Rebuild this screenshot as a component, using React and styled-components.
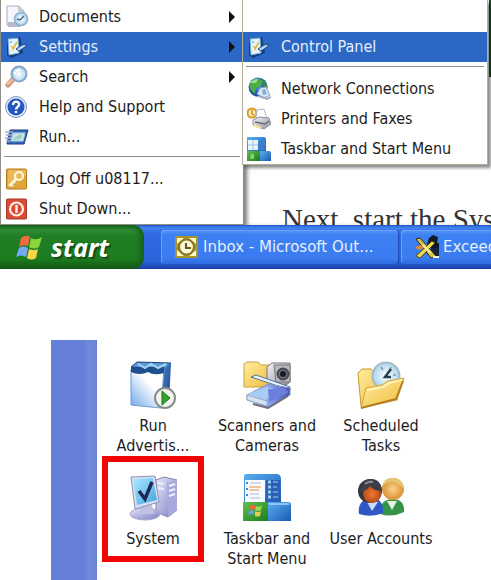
import React from 'react';
import styled, { createGlobalStyle, css } from 'styled-components';

const GlobalStyle = createGlobalStyle`
  * {
    box-sizing: border-box;
  }

  body {
    margin: 0;
    overflow: hidden;
    background: #fff;
    color: #1c1c1c;
    font-family: 'DejaVu Sans Condensed', 'Noto Sans', sans-serif;
    font-size: 16px;
  }

  button {
    margin: 0;
    padding: 0;
    border: 0;
    background: none;
    color: inherit;
    font: inherit;
  }
`;

const Page = styled.main`
  display: flex;
  flex-direction: column;
  gap: 71px;
`;

const Desktop = styled.section`
  overflow: hidden;
`;

const Workspace = styled.div`
  position: relative;
  display: flex;
`;

const MenuPanel = styled.nav`
  flex: none;
  width: 244px;
  padding-top: 2px;
  background: #fff;
  border: solid #8f8d86;
  border-width: 0 1px 1px;
`;

const SubMenuPanel = styled(MenuPanel)`
  position: absolute;
  top: 0;
  left: 242px;
  width: 246px;
  padding-top: 32px;
  border-color: #b5ad98;
  box-shadow: 3px 3px 3px rgba(0, 0, 0, 0.45);
`;

const MenuList = styled.ul`
  margin: 0;
  padding: 0;
  list-style: none;
`;

const MenuButton = styled.button`
  display: flex;
  align-items: center;
  gap: 10px;
  width: 100%;
  height: 30px;
  padding: 0 8px 0 4px;
  line-height: 20px;
  text-align: left;
  white-space: nowrap;

  ${props =>
    props.$active &&
    css`
      background: #2b67c4;
      color: #e4eefc;
    `}
`;

const MenuLabel = styled.span`
  flex: 1;
`;

const Separator = styled.hr`
  height: 1px;
  margin: 4px 3px 7px;
  border: 0;
  background: #8c8c8c;
`;

const Document = styled.article`
  flex: 1;
  display: flex;
  align-items: flex-end;
  min-width: 0;
  height: 225px;
  padding-left: 38px;
  overflow: hidden;
  box-shadow: inset 5px 0 4px -2px #777;
`;

const DocumentText = styled.p`
  flex: none;
  height: 22px;
  margin: 0;
  color: #333;
  font-family: 'Liberation Serif', serif;
  font-size: 29px;
  line-height: 32px;
  white-space: nowrap;
`;

const WindowEdge = styled.div`
  position: absolute;
  top: 0;
  right: 0;
  width: 2px;
  height: 77px;
  background: #14551c;
`;

const Taskbar = styled.footer`
  display: flex;
  gap: 17px;
  height: 44px;
  background: linear-gradient(#2456c4 0, #4285f0 3px, #2f6ae2 8px, #2a63da 36px, #1941a5 44px);
`;

const StartButton = styled.button`
  flex: none;
  display: flex;
  align-items: center;
  gap: 9px;
  width: 144px;
  padding-left: 16px;
  border-radius: 0 12px 12px 0;
  background: linear-gradient(#14601a 0, #2f8a34 5px, #1f7d24 12px, #1e7c20 34px, #105415 44px);
  box-shadow: inset -5px 0 5px -1px #14621b;
  color: #fff;
  font-family: 'Noto Sans', sans-serif;
  font-size: 25px;
  font-style: italic;
  font-weight: 700;
  line-height: 30px;
  text-shadow: 2px 2px 1px #174d18;
`;

const TaskList = styled.div`
  flex: 1;
  display: flex;
  gap: 3px;
  min-width: 0;
  padding: 5px 0;
`;

const TaskButton = styled.button`
  flex: none;
  display: flex;
  align-items: center;
  gap: 4px;
  width: 237px;
  padding-left: 14px;
  border-radius: 4px;
  background: linear-gradient(#5796f8, #3c80f2 5px, #3b7cf0 28px, #2f6ae0);
  box-shadow: inset 1px 1px 0 #6ba3fa, 1px 0 1px #1e4cb4;
  color: #e6effc;
  font-family: 'DejaVu Sans', sans-serif;
  font-size: 15px;
  white-space: nowrap;
`;

const Folder = styled.section`
  display: flex;
  margin-left: 51px;
`;

const SidePane = styled.aside`
  flex: none;
  width: 46px;
  background: linear-gradient(90deg, #6680d9 0 34px, #7088d8 35px 40px, #6f86d9 41px 44px, #647bd0 46px);
`;

const TileGrid = styled.div`
  display: grid;
  grid-template-columns: repeat(3, 102px);
  grid-auto-rows: 106px;
  gap: 7px 12px;
  padding: 3px 5px 18px;
`;

const Tile = styled.button`
  display: flex;
  flex-direction: column;
  align-items: center;
  justify-content: flex-start;
  gap: 7px;
  padding-top: 12px;
  border: 6px solid ${props => (props.$marked ? '#f00505' : 'transparent')};
`;

const TileLabel = styled.span`
  line-height: 20px;
  text-align: center;
  white-space: pre;
`;

const Drawing = styled.svg`
  flex: none;
`;

const Icon = ({ size = 24, children }) => (
  <Drawing width={size} height={size} viewBox={`0 0 ${size} ${size}`} aria-hidden="true">
    {children}
  </Drawing>
);

const GradientDefs = styled.svg`
  position: absolute;
`;

const Gradients = () => (
  <GradientDefs width="0" height="0" aria-hidden="true">
    <defs>
      <linearGradient id="paper" x1="0" y1="1" x2="1" y2="0">
        <stop offset="0" stopColor="#6fa6e8" />
        <stop offset="0.6" stopColor="#fff" />
      </linearGradient>
      <linearGradient id="navy" x2="1" y2="1">
        <stop offset="0" stopColor="#4a8bd0" />
        <stop offset="1" stopColor="#153b80" />
      </linearGradient>
      <linearGradient id="folder" x2="1" y2="1">
        <stop offset="0" stopColor="#fff0a0" />
        <stop offset="1" stopColor="#efb93c" />
      </linearGradient>
      <linearGradient id="scan" x2="1">
        <stop offset="0" stopColor="#cfe4ff" />
        <stop offset="0.6" stopColor="#7c98e8" />
        <stop offset="1" stopColor="#4150a8" />
      </linearGradient>
      <linearGradient id="metal" x2="1" y2="1">
        <stop offset="0" stopColor="#f5f5f8" />
        <stop offset="1" stopColor="#8f90a0" />
      </linearGradient>
      <linearGradient id="screen" x2="1" y2="1">
        <stop offset="0" stopColor="#aeeaff" />
        <stop offset="1" stopColor="#40a4e0" />
      </linearGradient>
      <linearGradient id="tower" x2="1" y2="1">
        <stop offset="0" stopColor="#e8e8fc" />
        <stop offset="1" stopColor="#7b7cc0" />
      </linearGradient>
      <linearGradient id="blue" x2="1" y2="1">
        <stop offset="0" stopColor="#5ab0f0" />
        <stop offset="1" stopColor="#1b58b4" />
      </linearGradient>
      <linearGradient id="green" x2="1" y2="1">
        <stop offset="0" stopColor="#62c04c" />
        <stop offset="1" stopColor="#177a20" />
      </linearGradient>
      <radialGradient id="lens">
        <stop offset="0" stopColor="#fff" />
        <stop offset="1" stopColor="#a9d5ee" />
      </radialGradient>
      <radialGradient id="globe" cx="0.35" cy="0.3">
        <stop offset="0" stopColor="#8ed0f8" />
        <stop offset="1" stopColor="#1450b0" />
      </radialGradient>
      <radialGradient id="darkFace">
        <stop offset="0" stopColor="#f07a30" />
        <stop offset="1" stopColor="#b64a18" />
      </radialGradient>
      <radialGradient id="lightFace">
        <stop offset="0" stopColor="#ffd088" />
        <stop offset="1" stopColor="#d79238" />
      </radialGradient>
    </defs>
  </GradientDefs>
);

const DocumentsIcon = () => (
  <Icon>
    <path d="M2 1h12l5 5v14H2z" fill="#f4f6fa" stroke="#a3aec0" />
    <path d="M14 1v5h5" fill="#cdd7e6" stroke="#a3aec0" />
    <path d="M3 17h9l4 5H3z" fill="#b5bdcc" />
    <circle cx="16" cy="14" r="6.5" fill="url(#lens)" stroke="#8fb0cc" strokeWidth="1.6" />
    <path d="M15 15l4-4M15 15l-3-1" stroke="#496481" strokeWidth="1.4" />
  </Icon>
);

const SettingsIcon = () => (
  <Icon>
    <path d="M2 4l13-2 3 16-12 5-4-3z" fill="#123e7e" />
    <path d="M3 4l10-1 1 15-10 2z" fill="#e4f2fa" stroke="#79aee0" />
    <path d="M7 11l1 3 4-7" fill="none" stroke="#e0b84d" strokeWidth="1.6" />
    <path d="M5 6h2v2H5z" fill="#9cc4e4" />
    <path d="M11 14l6-4 5-1-2 3-6 4z" fill="#b4d6f5" stroke="#214d88" />
  </Icon>
);

const SearchIcon = () => (
  <Icon>
    <path d="M9 13l-6 7" stroke="#c99274" strokeWidth="5" strokeLinecap="round" />
    <path d="M9 13l-6 6" stroke="#f2bc9c" strokeWidth="3" strokeLinecap="round" />
    <circle cx="14" cy="9" r="7.5" fill="url(#lens)" stroke="#88a6c8" strokeWidth="2" />
    <path d="M10 9c0-3 3-4 5-4" fill="none" stroke="#fff" strokeWidth="2" />
  </Icon>
);

const HelpIcon = () => (
  <Icon>
    <circle cx="11" cy="12" r="10.5" fill="#e3edf9" stroke="#8299c0" />
    <circle cx="11" cy="12" r="8.5" fill="#2458c0" />
    <path d="M8 10c0-5 7-4 6 0-.4 2-3 2-3 4.5M11 16v2" fill="none" stroke="#fff" strokeWidth="2.4" />
  </Icon>
);

const RunIcon = () => (
  <Icon>
    <path d="M5 5h18l-4 14H2z" fill="#3c69b8" stroke="#183c80" />
    <path d="M8 8h12l-2 8H6z" fill="#c9e9df" stroke="#a8cbf0" />
    <path d="M10 12l7-3-1 5-8 1z" fill="#9ccfbd" />
    <path d="M0 7h8M1 10h6M0 13h6M1 16h4" stroke="#9db0cf" strokeWidth="1.3" />
  </Icon>
);

const LogOffIcon = () => (
  <Icon>
    <rect x="1.5" y="2" width="20" height="20" rx="1" fill="#dda63a" stroke="#b67a1d" />
    <path d="M3 3h18v5L3 20z" fill="#f3cf75" opacity=".5" />
    <circle cx="14" cy="9" r="4" fill="none" stroke="#fff8db" strokeWidth="2.2" />
    <path d="M11 12l-7 7M5 17l3 2M8 14l2 2" stroke="#fff8db" strokeWidth="2.2" />
  </Icon>
);

const ShutDownIcon = () => (
  <Icon>
    <rect x="1.5" y="2" width="20" height="20" rx="1" fill="#d84c35" stroke="#a93728" />
    <circle cx="11.5" cy="12" r="6.5" fill="none" stroke="#fff1e8" strokeWidth="2.2" />
    <path d="M11.5 8v8" stroke="#fff1e8" strokeWidth="2.4" />
  </Icon>
);

const NetworkIcon = () => (
  <Icon>
    <circle cx="11" cy="10" r="9.5" fill="url(#globe)" />
    <path d="M4 4c5-4 9-2 12 0l-3 6-4 1-1 6C4 14 1 10 4 4z" fill="#4dac42" />
    <path d="M15 2c4 2 6 6 5 10l-4-3z" fill="#2e9145" />
    <path d="M3 6c2-3 5-4 8-4l-2 4z" fill="#b9efc5" opacity=".7" />
    <path d="M13 11l6-1 4 8-6 3-7-4z" fill="#dce6f4" stroke="#8fa0b9" />
    <path d="M15 13l3-1 2 5-4 1z" fill="#78aee8" />
    <path d="M12 19l8 3 4-2" fill="none" stroke="#9caabb" strokeWidth="2" />
  </Icon>
);

const PrinterIcon = () => (
  <Icon>
    <circle cx="5" cy="6" r="4.5" fill="#ffe8a0" stroke="#d99b28" strokeWidth="2" />
    <path d="M5 3v4l2 1" fill="none" stroke="#977022" />
    <path d="M10 3l7-1 3 10H9z" fill="#fff" stroke="#b0b7c4" />
    <path d="M6 13l6-3 10 1 2 6-7 5-11-4z" fill="url(#metal)" stroke="#8d8f99" />
    <path d="M8 15l10 2 4-3" fill="none" stroke="#666a76" strokeWidth="1.5" />
    <path d="M7 17l8 3-2 2-7-3z" fill="#f1df9b" />
  </Icon>
);

const TaskbarIcon = () => (
  <Icon>
    <path d="M0 0h17q2 0 2 2v13H0z" fill="url(#blue)" />
    <path d="M1 3h10v10H1z" fill="#e8f3fc" />
    <path d="M1 8h10M6 3v10" stroke="#9cc6ea" />
    <path d="M12 3h6v10h-6z" fill="#3d7fca" />
    <path d="M0 14h13v10H0z" fill="url(#green)" />
    <path d="M13 14h9q2 0 2 2v8H13z" fill="url(#blue)" />
    <path d="M4 17q2-1 3 1v4q-2-1-4 0z" fill="#8fd070" />
  </Icon>
);

const ArrowIcon = () => (
  <svg width="6" height="12" viewBox="0 0 6 12" aria-hidden="true">
    <path d="M0 0l6 6-6 6z" fill="#111" />
  </svg>
);

const FlagIcon = () => (
  <Icon size={26}>
    <path d="M5 4q5-4 9-1l-2 9q-5-2-9 1z" fill="#ef6b3b" />
    <path d="M15 4q5 3 11-1l-3 10q-5 3-10 0z" fill="#8bd33d" />
    <path d="M3 14q4-3 9 0l-2 9q-5-3-10 0z" fill="#73a9f5" />
    <path d="M13 15q5 2 9 0l-2 9q-5 3-9 0z" fill="#f7d448" />
  </Icon>
);

const OutlookIcon = () => (
  <Icon>
    <rect x="0" y="1" width="23" height="22" fill="#a8942a" />
    <path d="M2 3h7L2 9zM21 3h-7l7 6zM2 21h7l-7-6zM21 21h-7l7-6z" fill="#fff9cf" />
    <circle cx="11.5" cy="12" r="7.5" fill="#fffbdc" stroke="#8c7c20" strokeWidth="2.2" />
    <path d="M11 8v5h5" fill="none" stroke="#6b5c14" strokeWidth="2.2" />
  </Icon>
);

const ExceedIcon = () => (
  <Icon>
    <path d="M14 3l4-3 5 2-1 6h2v5l-4 2-5-3-3-3z" fill="#10192c" />
    <path d="M16 13h8v9l-4 1-6-5z" fill="#18233a" />
    <path d="M1 4l4-1 16 18-5 2z" fill="#d5c64a" stroke="#30290c" />
    <path d="M17 6l3 2L5 23l-4-2z" fill="#eddc52" stroke="#51430d" />
    <path d="M0 12l6-2 3 3-6 2z" fill="#e08a30" />
    <path d="M8 10l8 8" stroke="#fff09a" strokeWidth="2" />
    <path d="M18 22h6" stroke="#f4f4e0" strokeWidth="2" />
  </Icon>
);

const RunProgramsIcon = () => (
  <Icon size={48}>
    <path d="M2 6l6-5 34 1-5 6z" fill="#5b9bd8" stroke="#1a447d" />
    <path d="M34 8l8-6-2 40-8 5z" fill="url(#navy)" />
    <path d="M2 8h33l-3 39-30-3z" fill="url(#paper)" stroke="#6d9bce" />
    <path d="M2 6h33v6q-10 3-16-1-8 4-17 0z" fill="#1e508f" />
    <path d="M9 3l7 4 6-4 7 4 8-4" fill="none" stroke="#a8d3f3" strokeWidth="2" />
    <circle cx="36" cy="37" r="10" fill="#f2f4ef" stroke="#868d8b" strokeWidth="2" />
    <path d="M33 30l8 7-8 7z" fill="#35a52a" stroke="#1b7416" />
  </Icon>
);

const ScannerIcon = () => (
  <Icon size={48}>
    <path d="M1 3l3-2h11l3 3h10v22H1z" fill="url(#folder)" stroke="#cda045" />
    <path d="M24 6l5-4h18v19l-4 3-19-3z" fill="url(#metal)" stroke="#777" />
    <path d="M31 4h16v17H33z" fill="#b8b8bd" stroke="#777" />
    <circle cx="40" cy="13" r="5.5" fill="#6c6e78" stroke="#454750" strokeWidth="2" />
    <circle cx="40" cy="13" r="3" fill="#171b2b" />
    <path d="M8 16l5-2 34 12v3z" fill="#e8f5ff" stroke="#53759b" />
    <path d="M25 23l22 4v7L25 46l-21-7v-5z" fill="url(#scan)" stroke="#8694b8" />
    <path d="M5 33l19-7 17 4-19 9z" fill="#a9cbf4" />
    <path d="M25 28l16-1 5 4-20 10z" fill="#6c7fdc" />
    <path d="M4 34l20 6v5L4 39z" fill="#d5e2f3" stroke="#9aaac8" />
    <path d="M10 43l15 4 20-12" fill="none" stroke="#706d7a" strokeWidth="2" />
  </Icon>
);

const ScheduleIcon = () => (
  <Icon size={48}>
    <path d="M4 45L1 12l4-4h9l3 3 10 1 1 22z" fill="url(#folder)" stroke="#c9952e" />
    <circle cx="29" cy="15" r="13.5" fill="url(#lens)" stroke="#a5bac6" strokeWidth="2" />
    <path d="M24 6l2 3M34 6l-1 2M39 14h-3" stroke="#7899aa" strokeWidth="1.5" />
    <path d="M34 8l-6 8h6" fill="none" stroke="#27404f" strokeWidth="2.5" />
    <path d="M9 27l16-3 6-4 16-3-7 22-36 8z" fill="url(#folder)" stroke="#d3a23e" />
    <path d="M10 29l16-3 6-4 13-3" fill="none" stroke="#fff5bd" strokeWidth="2" />
    <path d="M4 47l35-9 7-18" fill="none" stroke="#b28022" strokeWidth="2" />
  </Icon>
);

const SystemIcon = () => (
  <Icon size={48}>
    <path d="M27 6l8-3 13 3v30l-9 7-12-5z" fill="url(#tower)" stroke="#8384ad" />
    <path d="M38 9l10-3v30l-9 7z" fill="#a9a8dc" />
    <path d="M29 9l6 1M29 14l6 1M40 12l6-2M40 17l6-2M40 22l6-2" stroke="#eef0ff" strokeWidth="2" />
    <ellipse cx="16" cy="40" rx="15" ry="6" fill="url(#tower)" stroke="#a8a8c8" />
    <path d="M12 31h11l2 9H12z" fill="#c1c1e4" />
    <path d="M2 3l24-1 4 26-24 7z" fill="#d9def4" stroke="#8c94b8" />
    <path d="M4 5l20-1 4 22-20 5z" fill="url(#screen)" />
    <path d="M10 17l6 8 7-17" fill="none" stroke="#242557" strokeWidth="3.5" />
  </Icon>
);

// Small start menu standing on a piece of the taskbar
const StartMenuIcon = () => (
  <Icon size={48}>
    <path d="M1 2q0-2 2-2h30q5 0 5 5v24H1z" fill="url(#blue)" />
    <path d="M2 6h20v22H2z" fill="#f6fafe" />
    <path d="M7 9h11M7 20h9M7 24h10" stroke="#c3d2e2" strokeWidth="1.5" />
    <path d="M6 13h12M6 16h10" stroke="#efb47d" strokeWidth="1.5" />
    <path d="M4 8v2M4 14v2M4 20v2" stroke="#4386d0" strokeWidth="2" />
    <path d="M23 6h14v22H23z" fill="#2861b6" />
    <path d="M25 8h3M25 13h3M25 18h3M25 23h3" stroke="#9bcef5" strokeWidth="3" />
    <path d="M30 8h5M30 13h4M30 18h5M30 23h5" stroke="#79a9e4" strokeWidth="1.5" />
    <path d="M0 28h27v19H0z" fill="url(#green)" />
    <path d="M25 28h20q3 0 3 3v16H25z" fill="url(#blue)" />
    <path d="M7 32q3-3 5 0v4q-3-2-6 0z" fill="#e9683c" />
    <path d="M13 32q3 2 6-1l-1 5q-3 2-6 0z" fill="#9bda55" />
    <path d="M6 37q3-2 5 0v4q-3-2-6 0z" fill="#6b9bdf" />
    <path d="M12 37q3 2 6 0l-1 5q-3 1-5 0z" fill="#e9ca55" />
    <path d="M26 30h20" stroke="#8bc4ff" strokeWidth="2" />
  </Icon>
);

const UsersIcon = () => (
  <Icon size={48}>
    <path d="M23 39q-1-13 12-14 13 0 12 13-12 6-24 2z" fill="#359447" />
    <path d="M30 27l5 9 5-9" fill="#e9f3df" />
    <circle cx="36" cy="15" r="11" fill="url(#lightFace)" />
    <path d="M25 13Q26 4 36 4q10 0 11 11-5-6-12-7-6 0-10 5z" fill="#e6c673" />
    <path d="M2 40q-2-14 12-16 13 0 12 15-12 5-24 1z" fill="#3157c7" />
    <path d="M10 28l5 9 6-9" fill="#c9dcff" />
    <circle cx="13" cy="17" r="12" fill="#34363b" />
    <circle cx="15" cy="20" r="9" fill="url(#darkFace)" />
    <path d="M3 17Q4 5 14 5q10 0 11 12-8 0-12-5-4 6-10 5z" fill="#3b3f45" />
    <path d="M8 10q3-3 8-2" fill="none" stroke="#8a8f96" strokeWidth="2" />
  </Icon>
);

const MenuItem = ({ icon: ItemIcon, label, active, hasMenu }) => (
  <li>
    <MenuButton type="button" $active={active} aria-haspopup={hasMenu ? 'menu' : undefined}>
      <ItemIcon />
      <MenuLabel>{label}</MenuLabel>
      {hasMenu && <ArrowIcon />}
    </MenuButton>
  </li>
);

const tiles = [
  { label: 'Run\nAdvertis...', icon: RunProgramsIcon },
  { label: 'Scanners and\nCameras', icon: ScannerIcon },
  { label: 'Scheduled\nTasks', icon: ScheduleIcon },
  { label: 'System', icon: SystemIcon, marked: true },
  { label: 'Taskbar and\nStart Menu', icon: StartMenuIcon },
  { label: 'User Accounts', icon: UsersIcon },
];

const App = () => {
  return (
    <Page>
      <GlobalStyle />
      <Gradients />
      <Desktop>
        <Workspace>
          <MenuPanel>
            <MenuList>
              <MenuItem icon={DocumentsIcon} label="Documents" hasMenu />
              <MenuItem icon={SettingsIcon} label="Settings" active hasMenu />
              <MenuItem icon={SearchIcon} label="Search" hasMenu />
              <MenuItem icon={HelpIcon} label="Help and Support" />
              <MenuItem icon={RunIcon} label="Run..." />
            </MenuList>
            <Separator />
            <MenuList>
              <MenuItem icon={LogOffIcon} label="Log Off u08117..." />
              <MenuItem icon={ShutDownIcon} label="Shut Down..." />
            </MenuList>
          </MenuPanel>
          <Document>
            <DocumentText>Next, start the Sys</DocumentText>
          </Document>
          <WindowEdge />
          <SubMenuPanel>
            <MenuList>
              <MenuItem icon={SettingsIcon} label="Control Panel" active />
            </MenuList>
            <Separator />
            <MenuList>
              <MenuItem icon={NetworkIcon} label="Network Connections" />
              <MenuItem icon={PrinterIcon} label="Printers and Faxes" />
              <MenuItem icon={TaskbarIcon} label="Taskbar and Start Menu" />
            </MenuList>
          </SubMenuPanel>
        </Workspace>
        <Taskbar>
          <StartButton type="button">
            <FlagIcon />
            start
          </StartButton>
          <TaskList>
            <TaskButton type="button">
              <OutlookIcon />
              Inbox - Microsoft Out...
            </TaskButton>
            <TaskButton type="button">
              <ExceedIcon />
              Exceed
            </TaskButton>
          </TaskList>
        </Taskbar>
      </Desktop>
      <Folder>
        <SidePane />
        <TileGrid>
          {tiles.map(({ label, icon: TileIcon, marked }) => (
            <Tile key={label} type="button" $marked={marked}>
              <TileIcon />
              <TileLabel>{label}</TileLabel>
            </Tile>
          ))}
        </TileGrid>
      </Folder>
    </Page>
  );
};

export default App;
